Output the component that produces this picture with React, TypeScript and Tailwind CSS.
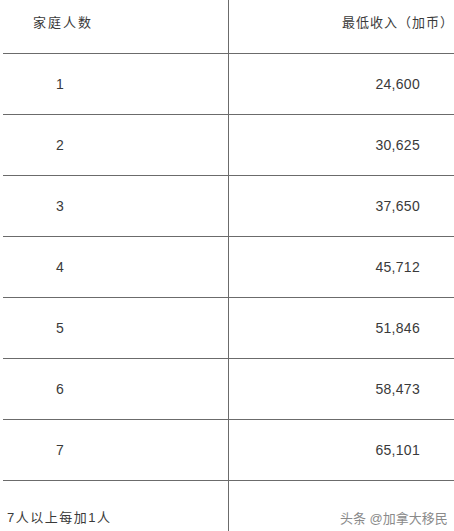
const rows = [
  { size: '1', income: '24,600' },
  { size: '2', income: '30,625' },
  { size: '3', income: '37,650' },
  { size: '4', income: '45,712' },
  { size: '5', income: '51,846' },
  { size: '6', income: '58,473' },
  { size: '7', income: '65,101' },
];

export default function App() {
  return (
    <div
      className="w-[454px] h-[531px] overflow-hidden bg-white text-[#3a3a3a] text-[13px]"
      style={{ fontFamily: '"Liberation Sans", "Noto Sans CJK SC", sans-serif' }}
    >
      {/* header */}
      <div className="flex h-[54px] border-b border-[#6b6b6b] ml-[3px]">
        <div className="w-[226px] shrink-0 h-full border-r border-[#6b6b6b] pl-[30px] pt-[13px] tracking-[2px]">
          家庭人数
        </div>
        <div className="flex-1 min-w-0 pl-[113px] pt-[13px] whitespace-nowrap tracking-[1px]">
          最低收入（加币）
        </div>
      </div>

      {/* data rows */}
      {rows.map((r) => (
        <div key={r.size} className="flex h-[61px] border-b border-[#6b6b6b] ml-[3px]">
          <div className="w-[226px] shrink-0 h-full border-r border-[#6b6b6b] flex items-center pl-[53px] text-[14px]">
            {r.size}
          </div>
          <div className="flex-1 min-w-0 flex items-center justify-end pr-[34px] text-[14px] tracking-[0.3px]">
            {r.income}
          </div>
        </div>
      ))}

      {/* last row, cut off */}
      <div className="flex h-[60px]">
        <div className="w-[229px] shrink-0 h-full border-r border-[#6b6b6b] pl-[7px] pt-[27px] whitespace-nowrap tracking-[1.5px]">
          7人以上每加1人
        </div>
        <div className="flex-1 min-w-0 pl-[111px] pt-[28px] whitespace-nowrap text-[13px] text-[#8a8a8a]">
          头条 @加拿大移民
        </div>
      </div>
    </div>
  );
}
